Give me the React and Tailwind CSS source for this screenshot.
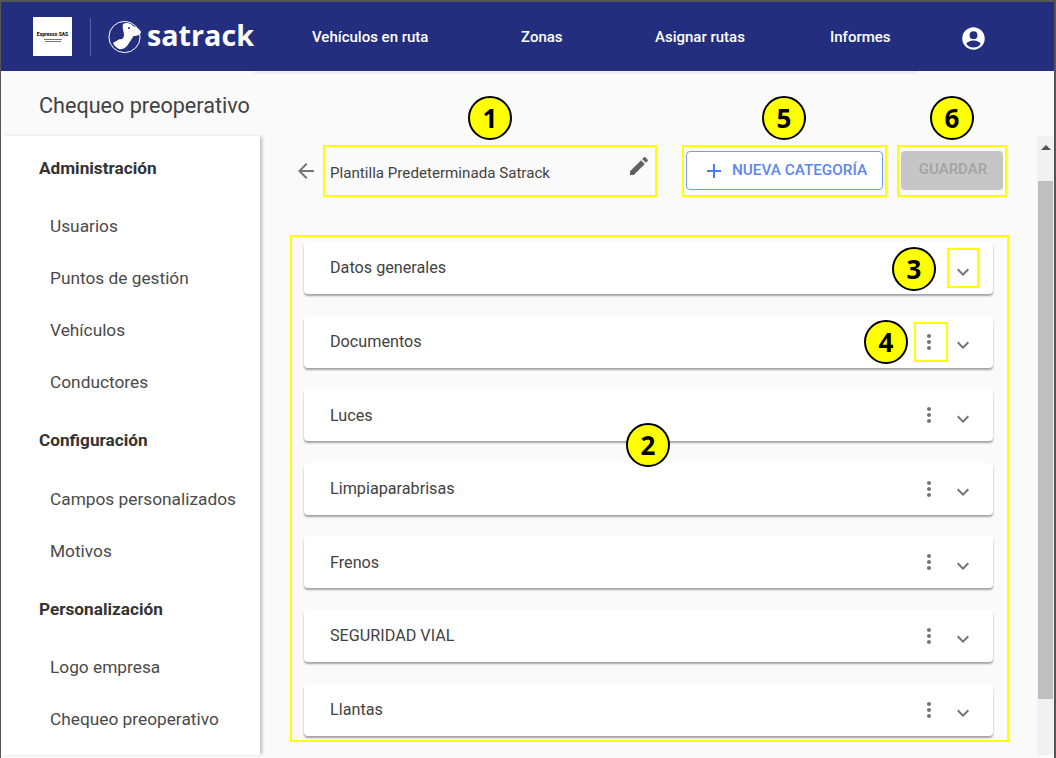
import React from 'react';

const navItems = [
  { label: 'Vehículos en ruta', className: 'ml-[57px] w-[118px]' },
  { label: 'Zonas', className: 'ml-[91px] w-[42px]' },
  { label: 'Asignar rutas', className: 'ml-[92px] w-[90px]' },
  { label: 'Informes', className: 'ml-[85px] w-[61px]' },
];

const sideGroups = [
  { title: 'Administración', items: ['Usuarios', 'Puntos de gestión', 'Vehículos', 'Conductores'] },
  { title: 'Configuración', items: ['Campos personalizados', 'Motivos'] },
  { title: 'Personalización', items: ['Logo empresa', 'Chequeo preoperativo'] },
];

const categories = ['Datos generales', 'Documentos', 'Luces', 'Limpiaparabrisas', 'Frenos', 'SEGURIDAD VIAL', 'Llantas'];

// ─── Icons (material paths) ───────────────────────────────────
const Icon = ({ d, className }) => (
  <svg viewBox="0 0 24 24" className={className} fill="currentColor">
    <path d={d} />
  </svg>
);

const ICONS = {
  back: 'M20 11H7.83l5.59-5.59L12 4l-8 8 8 8 1.41-1.41L7.83 13H20v-2z',
  edit: 'M3 17.25V21h3.75L17.81 9.94l-3.75-3.75L3 17.25zM20.71 7.04a1 1 0 0 0 0-1.41l-2.34-2.34a1 1 0 0 0-1.41 0l-1.83 1.83 3.75 3.75 1.83-1.83z',
  more: 'M12 8c1.1 0 2-.9 2-2s-.9-2-2-2-2 .9-2 2 .9 2 2 2zm0 2c-1.1 0-2 .9-2 2s.9 2 2 2 2-.9 2-2-.9-2-2-2zm0 6c-1.1 0-2 .9-2 2s.9 2 2 2 2-.9 2-2-.9-2-2-2z',
  chevron: 'M16.59 8.59 12 13.17 7.41 8.59 6 10l6 6 6-6z',
  plus: 'M19 13h-6v6h-2v-6H5v-2h6V5h2v6h6v2z',
  user: 'M12 2C6.48 2 2 6.48 2 12s4.48 10 10 10 10-4.48 10-10S17.52 2 12 2zm0 3.5a3.5 3.5 0 1 1 0 7 3.5 3.5 0 0 1 0-7zM12 20c-2.6 0-4.9-1.2-6.3-3.2.1-2 4.2-3.1 6.3-3.1s6.2 1.1 6.3 3.1C16.9 18.8 14.6 20 12 20z',
};

const DogLogo = () => (
  <svg viewBox="0 0 34 34" className="w-[34px] h-[34px]">
    <circle cx="16.5" cy="17" r="15.6" fill="none" stroke="#fff" strokeWidth="1" />
    <path
      d="M15 4 C18 2 23 3 25 6 C28 7 32 9 33 12 C32.5 15 29 16 25.5 16 C24 18 23 21 21 23 C19 27 15 30 11 29 C9 28 6 26 5 23 C8 21 10 20 12 19 C14 20 16 18 16 15 C16 12 14 8 15 4 Z"
      fill="#fff"
    />
    <circle cx="21" cy="8" r="1" fill="#232f7e" />
  </svg>
);

// ─── Yellow numbered callout ──────────────────────────────────
const Badge = ({ n, className }) => (
  <div
    className={`absolute w-[44px] h-[44px] rounded-full bg-[#ffff00] border-2 border-black flex items-center justify-center text-[26px] font-bold text-black font-['Open_Sans',sans-serif] ${className}`}
  >
    {n}
  </div>
);

export default function App() {
  return (
    <div className="relative w-[1056px] h-[758px] overflow-hidden bg-[#fafafa] font-['Roboto',sans-serif] border-t-2 border-l border-r-2 border-[#555555]">
      {/* Header */}
      <header className="h-[69px] bg-[#232f7e] flex items-center text-white">
        <div className="ml-[32px] w-[39px] h-[39px] bg-white flex flex-col items-center justify-center text-black">
          <span className="text-[5px] leading-[6px] font-bold whitespace-nowrap">Expresso SAS</span>
          <span className="w-[18px] h-px mt-[2px] bg-[#777777]" />
          <span className="w-[16px] h-px mt-px bg-[#777777]" />
        </div>
        <div className="ml-[18px] w-px h-[38px] bg-[#5560a0]" />
        <div className="ml-[17px]">
          <DogLogo />
        </div>
        <span className="ml-[5px] w-[108px] text-[28.7px] leading-none font-bold font-['Open_Sans',sans-serif] -mt-[3px]">satrack</span>
        {navItems.map((item) => (
          <span key={item.label} className={`${item.className} mt-[2px] text-[15px] font-medium whitespace-nowrap`}>
            {item.label}
          </span>
        ))}
        <Icon d={ICONS.user} className="ml-[69px] mt-[3px] w-[27px] h-[27px] text-white" />
      </header>

      <div className="flex h-[687px]">
        {/* Sidebar */}
        <aside className="w-[259px] shrink-0 flex flex-col">
          <div className="h-[65px] pl-[38px] pt-[22px] text-[21.6px] leading-[26px] text-[#424242]">Chequeo preoperativo</div>
          <nav className="flex-1 bg-white shadow-[3px_0_3px_-1px_rgba(0,0,0,0.25)] mb-[3px]">
            {sideGroups.map((group) => (
              <div key={group.title}>
                <div className="h-[64.6px] pl-[38px] pt-px flex items-center text-[17.2px] font-bold text-[#333333]">{group.title}</div>
                {group.items.map((item) => (
                  <div key={item} className="h-[52px] pl-[49px] pt-px flex items-center text-[17.3px] text-[#4a4a4a]">
                    {item}
                  </div>
                ))}
              </div>
            ))}
          </nav>
        </aside>

        {/* Main */}
        <main className="flex-1 pt-[74px] pl-[37px] relative">
          <div className="absolute top-0 left-[-6px] w-[663px] h-[3px] bg-[#eeeeee]" />
          <div className="flex h-[52px]">
            <div className="w-[26px] flex items-center">
              <Icon d={ICONS.back} className="w-[24px] h-[24px] -ml-[3px] text-[#757575]" />
            </div>
            <div className="w-[334px] border-2 border-[#ffff00] flex items-center justify-between pl-[5px] pr-[4px]">
              <span className="text-[15.15px] text-[#424242] mt-[5px]">Plantilla Predeterminada Satrack</span>
              <Icon d={ICONS.edit} className="w-[24px] h-[24px] -mt-[10px] text-[#616161]" />
            </div>
            <div className="ml-[25px] w-[205px] border-2 border-[#ffff00] px-[2px] py-[4px]">
              <button className="w-full h-[39px] rounded border border-[#6f9cf7] bg-white flex items-center justify-center gap-[6px] text-[15.3px] font-medium text-[#5a87f2]">
                <Icon d={ICONS.plus} className="w-[24px] h-[24px] text-[#4a7cf0] mt-px" />
                <span className="-mt-[1px]">NUEVA CATEGORÍA</span>
              </button>
            </div>
            <div className="ml-[10px] w-[110px] border-2 border-[#ffff00] px-[2px] py-[4px]">
              <button className="w-full h-[39px] rounded bg-[#c6c6c6] text-[15px] font-medium text-[#a3a3a3]">
                <span className="relative -top-px left-px">GUARDAR</span>
              </button>
            </div>
          </div>

          {/* Categories */}
          <div className="mt-[38px] -ml-[7px] w-[719px] h-[507px] border-2 border-[#ffff00] pt-[5px] pl-[12px] flex flex-col gap-[21.6px]">
            {categories.map((name, i) => (
              <div
                key={name}
                className="w-[689px] h-[52px] shrink-0 rounded bg-white shadow-[0_2px_2px_rgba(0,0,0,0.35)] flex items-center pl-[26px] text-[#424242]"
              >
                <span className="text-[16.2px] flex-1 mt-px">{name}</span>
                {i > 0 && <Icon d={ICONS.more} className="w-[24px] h-[24px] text-[#757575]" />}
                <Icon d={ICONS.chevron} className="ml-[10px] mr-[18px] mt-[7px] w-[24px] h-[24px] text-[#757575]" />
              </div>
            ))}
          </div>
        </main>

        {/* Scrollbar */}
        <div className="w-[17px] shrink-0 mt-[65px] mb-[3px] bg-[#f1f1f1] flex flex-col items-center">
          <div className="mt-[9px] w-0 h-0 border-x-[5px] border-x-transparent border-b-[5px] border-b-[#505050]" />
          <div className="mt-[31px] w-[15px] h-[518px] bg-[#bfbfbf]" />
        </div>
      </div>

      {/* Annotation overlays */}
      <div className="absolute left-[946px] top-[246px] w-[32px] h-[40px] border-2 border-[#ffff00]" />
      <div className="absolute left-[913px] top-[320px] w-[34px] h-[40px] border-2 border-[#ffff00]" />
      <Badge n="1" className="left-[467px] top-[94px]" />
      <Badge n="5" className="left-[761px] top-[94px]" />
      <Badge n="6" className="left-[929px] top-[94px]" />
      <Badge n="3" className="left-[891px] top-[245px]" />
      <Badge n="4" className="left-[863px] top-[318px]" />
      <Badge n="2" className="left-[625px] top-[421px]" />
    </div>
  );
}
